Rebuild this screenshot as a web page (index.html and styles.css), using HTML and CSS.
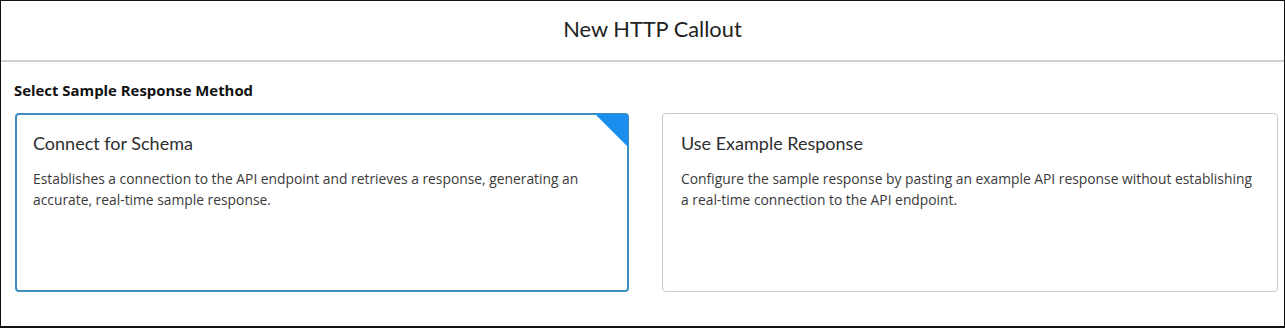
FILE: index.html
```html
<!DOCTYPE html>
<html>
<head>
<meta charset="utf-8">
<link rel="stylesheet" href="styles.css">
</head>
<body>
<div class="frame">
  <header class="modal-header">
    <h1 class="modal-title">New HTTP Callout</h1>
  </header>
  <section class="modal-body">
    <h2 class="section-label">Select Sample Response Method</h2>
    <div class="cards">
      <div class="card card-selected">
        <span class="corner"></span>
        <div class="card-title">Connect for Schema</div>
        <p class="card-desc">Establishes a connection to the API endpoint and retrieves a response, generating an accurate, real-time sample response.</p>
      </div>
      <div class="card">
        <div class="card-title">Use Example Response</div>
        <p class="card-desc">Configure the sample response by pasting an example API response without establishing a real-time connection to the API endpoint.</p>
      </div>
    </div>
  </section>
</div>
</body>
</html>
```

FILE: styles.css
```css
html, body {
  margin: 0;
  padding: 0;
  background: #ffffff;
}
body {
  font-family: "Lato", "Noto Sans", "Liberation Sans", sans-serif;
  color: #181818;
}
.frame {
  width: 1285px;
  height: 328px;
  box-sizing: border-box;
  border: 1px solid #111111;
  border-bottom-width: 2px;
  display: flex;
  flex-direction: column;
}
.modal-header {
  height: 61px;
  box-sizing: border-box;
  border-bottom: 2px solid #d0d0d0;
  display: flex;
  align-items: center;
  justify-content: center;
  padding: 0 0 4px 20px;
}
.modal-title {
  margin: 0;
  font-size: 21.8px;
  font-weight: 400;
  color: #222222;
  line-height: 28px;
}
.modal-body {
  padding: 18px 6px 0 13px;
}
.section-label {
  margin: 0 0 13px 0;
  font-family: "Open Sans", "Noto Sans", sans-serif;
  font-size: 14.9px;
  font-weight: 700;
  line-height: 20px;
  color: #111111;
}
.cards {
  display: flex;
  gap: 33px;
  padding-left: 1px;
}
.card {
  position: relative;
  flex: 1 1 0;
  height: 179px;
  box-sizing: border-box;
  border: 1px solid #c9c9c9;
  border-radius: 4px;
  padding: 17px 18px 0 18px;
}
.card-selected {
  border: 2px solid #3c8fbd;
  padding: 16px 16px 0 16px;
}
.corner {
  position: absolute;
  top: -1px;
  right: -1px;
  width: 33px;
  height: 33px;
  background: #1b8ff0;
  clip-path: polygon(0 0, 100% 0, 100% 100%);
  border-top-right-radius: 4px;
}
.card-title {
  font-size: 18px;
  line-height: 24px;
  font-weight: 400;
  color: #2e2e2e;
}
.card-desc {
  margin: 13px 0 0 0;
  font-family: "Open Sans", "Noto Sans", sans-serif;
  font-size: 13.83px;
  line-height: 21px;
  color: #3a3a3a;
}
```
